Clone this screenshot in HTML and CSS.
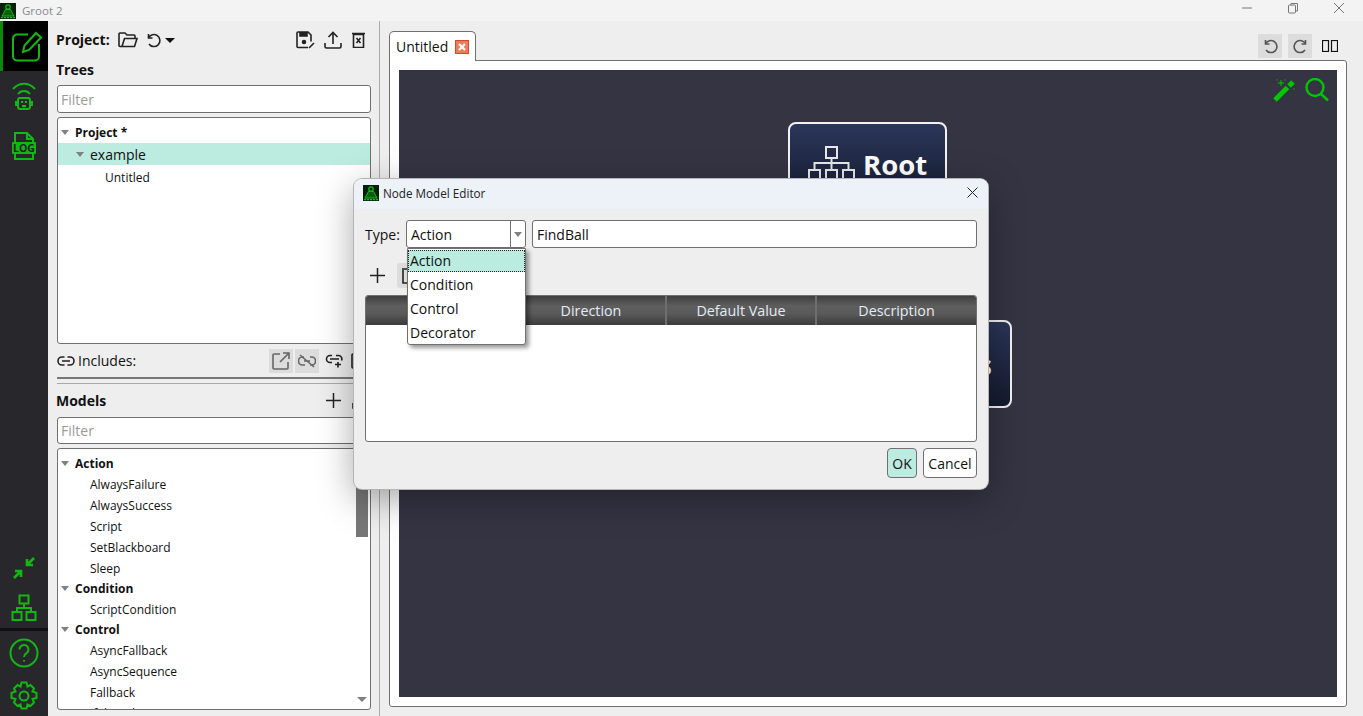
FILE: index.html

```html
<!DOCTYPE html>
<html lang="en">
<head>
  <meta charset="UTF-8" />
  <meta name="viewport" content="width=device-width, initial-scale=1.0" />
  <title>Groot 2</title>
  <link rel="stylesheet" href="styles.css">
</head>
<body>

<header class="titlebar">
  <svg class="logo" viewBox="0 0 16 16"><rect width="16" height="16" fill="#04200a"/><circle cx="8" cy="4" r="2.200" fill="none" stroke="#14b814" stroke-width="1.300"/><path d="M5.500 6.500h5L14 13H2z" fill="#0b5f0b" stroke="#14b814"/><path d="M1 14.500h14" stroke="#14b814" stroke-width="1.600" stroke-dasharray="2 1"/></svg>
  <span class="app-name">Groot 2</span>
  <div class="win-btns">
    <svg viewBox="0 0 12 12"><path d="M1 6h10"/></svg>
    <svg viewBox="0 0 12 12"><rect x="1.500" y="3" width="7" height="8" rx="1"/><path d="M4 3V1.500h6.500V9H8.500"/></svg>
    <svg viewBox="0 0 12 12"><path d="M1 1l10 10M11 1L1 11"/></svg>
  </div>
</header>

<div class="app">
  <nav class="sidebar">
    <div class="side-item active">
      <svg width="32" height="32" viewBox="0 0 32 32"><path d="M18 4.500H7a4 4 0 0 0-4 4v18a4 4 0 0 0 4 4h18a4 4 0 0 0 4-4V14"/><path d="M13 22l1.500-6.500L26 3l5 4.500L19 20z"/></svg>
    </div>
    <div class="side-item">
      <svg width="26" height="30" viewBox="0 0 26 30"><path d="M2 8C8 1 18 1 24 8M7 13c3-4 9-4 12 0"/><rect x="7" y="17" width="12" height="11" rx="2"/><path d="M5 20v5M21 20v5M11 25h4"/><path d="M10 21h2M14 21h2"/></svg>
    </div>
    <div class="side-item">
      <svg width="26" height="28" viewBox="0 0 26 28"><path d="M4 10V1h12l6 6v3M4 22v5h18v-5M16 1v6h6"/><rect x="1" y="10" width="24" height="12" rx="1" fill="#12b812" stroke="none"/><text x="13" y="20" class="log-text">LOG</text></svg>
    </div>
    <div class="side-spacer"></div>
    <div class="side-item small">
      <svg class="thick" width="24" height="24" viewBox="0 0 24 24"><path d="M22 2l-7 7M15 3v6h6M2 22l7-7M3 15h6v6"/></svg>
    </div>
    <div class="side-item small">
      <svg width="26" height="28" viewBox="0 0 26 28"><rect x="8.500" y="1.500" width="9" height="8"/><rect x="1.500" y="18" width="9" height="8"/><rect x="15.500" y="18" width="9" height="8"/><path d="M13 9.500V14M6 18v-4h14v4"/></svg>
    </div>
    <div class="side-divider"></div>
    <div class="side-item help">
      <svg width="30" height="30" viewBox="0 0 30 30"><circle cx="15" cy="15" r="13.500"/><path d="M10.500 11.500a4.500 4.500 0 1 1 7 3.700c-1.500 1-2.500 1.800-2.500 3.800"/><path d="M15 22v1.500"/></svg>
    </div>
    <div class="side-item gear">
      <svg width="30" height="30" viewBox="0 0 30 30"><circle cx="15" cy="15" r="4.500"/><path d="M12.500 1.500h5l1 4 3-1.500 3.500 3.500-1.500 3 4 1.500v5l-4 1 1.500 3.500-3.500 3.500-3-1.500-1 4h-5l-1-4-3 1.500-3.500-3.500 1.500-3.500-4-1v-5l4-1.500-1.500-3L8.500 4l3 1.500z"/></svg>
    </div>
  </nav>

  <aside class="panel">
    <div class="project-row">
      <span class="heading">Project:</span>
      <svg class="ic folder" width="20" height="16" viewBox="0 0 20 16"><path d="M4 14.500H2A1 1 0 0 1 1 13.500V2a1 1 0 0 1 1-1h5l2 2h7a1 1 0 0 1 1 1v2M4 14.500L6.500 6.500H19l-2.500 8z"/></svg>
      <svg class="ic undo" width="15" height="15" viewBox="0 0 15 15"><path d="M2.500 1v4h4"/><path d="M2.500 5A6 6 0 1 1 3 11"/></svg>
      <span class="caret black"></span>
      <div class="spacer"></div>
      <svg class="ic" width="19" height="18" viewBox="0 0 19 18"><path d="M12 16.500H2a1 1 0 0 1-1-1V2a1 1 0 0 1 1-1h10l3 3v6.500"/><path d="M4 1v4h7V1" fill="#222"/><circle cx="8" cy="11" r="1.500" fill="#222"/><path d="M13 17l5-5"/></svg>
      <svg class="ic upload" width="18" height="18" viewBox="0 0 18 18"><path d="M9 13V1.500M4.500 6L9 1.500 13.500 6M1 12v3.500a1.500 1.500 0 0 0 1.500 1.500h13a1.500 1.500 0 0 0 1.500-1.500V12"/></svg>
      <svg class="ic trashx" width="13" height="16" viewBox="0 0 13 16"><path d="M1.500 2.500h10v13h-10zM0 1.500h13"/><path d="M4.500 6l4 5M8.500 6l-4 5"/></svg>
    </div>
    <div class="section-row trees-row"><span class="heading">Trees</span></div>
    <input class="filter" type="text" placeholder="Filter" />
    <div class="tree project-tree">
      <div class="row top"><span class="caret"></span><b>Project *</b></div>
      <div class="row sub selected"><span class="caret"></span><span class="big">example</span></div>
      <div class="row leaf">Untitled</div>
    </div>
    <div class="includes-row">
      <svg class="ic" width="18" height="10" viewBox="0 0 18 10"><path d="M7.500 1H5a4 4 0 0 0 0 8h2.500M10.500 1H13a4 4 0 0 1 0 8h-2.500M5 5h8"/></svg>
      <span class="includes-label">Includes:</span>
      <div class="spacer"></div>
      <span class="tool-btn"><svg class="ic soft" width="18" height="18" viewBox="0 0 18 18"><path d="M8 2H2a1 1 0 0 0-1 1v13a1 1 0 0 0 1 1h13a1 1 0 0 0 1-1v-6M11 1h6v6M17 1L8 10"/></svg></span>
      <span class="tool-btn"><svg class="ic soft" width="18" height="14" viewBox="0 0 18 14"><path d="M6 3H4.500a4 4 0 0 0 0 8H7M12 3h1.500a4 4 0 0 1 0 8H12M6 7h6M2 1l14 12"/></svg></span>
      <svg class="ic add-link" width="18" height="14" viewBox="0 0 18 14"><path d="M7 1.500H5a3.500 3.500 0 0 0 0 7h2M11 1.500h2.500a3.500 3.500 0 0 1 3 5M5 5h9M13 8v5.500M10 10.500h6"/></svg>
      <svg class="ic tail" width="16" height="16" viewBox="0 0 16 16"><path d="M4 1H2a1 1 0 0 0-1 1v12a1 1 0 0 0 1 1h12V1z"/></svg>
    </div>
    <div class="splitter"></div>
    <div class="section-row models-row">
      <span class="heading">Models</span>
      <div class="spacer"></div>
      <svg class="ic plus" width="15" height="15" viewBox="0 0 15 15"><path d="M7.500 0v15M0 7.500h15"/></svg>
      <svg class="ic tail" width="16" height="16" viewBox="0 0 16 16"><path d="M8 1v10M4 7l4 4 4-4M2 10v5h12v-5"/></svg>
    </div>
    <input class="filter models-filter" type="text" placeholder="Filter" />
    <div class="tree model-tree">
      <div class="row top"><span class="caret"></span><b>Action</b></div>
      <div class="row leaf tall">AlwaysFailure</div>
      <div class="row leaf tall">AlwaysSuccess</div>
      <div class="row leaf tall">Script</div>
      <div class="row leaf tall">SetBlackboard</div>
      <div class="row leaf tall">Sleep</div>
      <div class="row top"><span class="caret"></span><b>Condition</b></div>
      <div class="row leaf tall">ScriptCondition</div>
      <div class="row top"><span class="caret"></span><b>Control</b></div>
      <div class="row leaf tall">AsyncFallback</div>
      <div class="row leaf tall">AsyncSequence</div>
      <div class="row leaf tall">Fallback</div>
      <div class="row leaf tall">IfThenElse</div>
      <div class="scroll-thumb"></div>
      <span class="caret scroll-down"></span>
    </div>
  </aside>

  <main class="workspace">
    <div class="tab-row">
      <div class="tab">
        <span>Untitled</span>
        <span class="tab-close"><svg width="8" height="8" viewBox="0 0 8 8"><path d="M1 1l6 6M7 1L1 7"/></svg></span>
      </div>
      <div class="spacer"></div>
      <span class="tool-btn"><svg class="ic soft2" width="15" height="15" viewBox="0 0 15 15"><path d="M2.500 1v4h4"/><path d="M2.500 5A6 6 0 1 1 3 11"/></svg></span>
      <span class="tool-btn"><svg class="ic soft2" width="15" height="15" viewBox="0 0 15 15"><path d="M12.500 1v4h-4"/><path d="M12.500 5A6 6 0 1 0 12 11"/></svg></span>
      <svg class="ic columns" width="16" height="12" viewBox="0 0 16 12"><rect x="0.500" y="0.500" width="6" height="11"/><rect x="9.500" y="0.500" width="6" height="11"/></svg>
    </div>
    <div class="tab-pane">
      <div class="canvas">
        <div class="canvas-tools">
          <svg width="24" height="24" viewBox="0 0 24 24"><path class="wand" d="M3 22L15.500 9.500M17 8l4-4"/><path class="sparks" d="M9 2v6M6 5h6M5 1.500v1M13 1.500v1M22 10.500v1"/></svg>
          <svg class="lens" width="24" height="24" viewBox="0 0 24 24"><circle cx="10" cy="9.500" r="8.500"/><path d="M16 16l7 6.500"/></svg>
        </div>
        <div class="node root-node">
          <svg width="48" height="42" viewBox="0 0 48 42"><rect x="18" y="1" width="11" height="11"/><rect x="1" y="24" width="11" height="13"/><rect x="18" y="24" width="11" height="13"/><rect x="35" y="24" width="11" height="13"/><path d="M23.500 12v12M6.500 24v-7h34v7"/></svg>
          <span>Root</span>
        </div>
        <div class="node seq-node"><span>s</span></div>
      </div>
    </div>
  </main>
</div>

<section class="dialog">
  <div class="dialog-title">
    <svg class="logo small-logo" viewBox="0 0 16 16"><rect width="16" height="16" fill="#04200a"/><circle cx="8" cy="4" r="2.200" fill="none" stroke="#14b814" stroke-width="1.300"/><path d="M5.500 6.500h5L14 13H2z" fill="#0b5f0b" stroke="#14b814"/><path d="M1 14.500h14" stroke="#14b814" stroke-width="1.600" stroke-dasharray="2 1"/></svg>
    <span>Node Model Editor</span>
    <div class="spacer"></div>
    <svg class="dialog-x" width="11" height="11" viewBox="0 0 11 11"><path d="M0.500 0.500l10 10M10.500 0.500l-10 10"/></svg>
  </div>
  <div class="dialog-body">
    <div class="type-row">
      <label class="type-label">Type:</label>
      <div class="combo"><span class="combo-text">Action</span><span class="combo-arrow"><span class="caret"></span></span></div>
      <input class="name-input" type="text" value="FindBall" />
    </div>
    <div class="port-tools">
      <svg class="ic plus" width="15" height="15" viewBox="0 0 15 15"><path d="M7.500 0v15M0 7.500h15"/></svg>
      <span class="del-btn"><svg class="ic" width="12" height="16" viewBox="0 0 12 16"><path d="M1 2v13h10V2M0 1h12"/></svg></span>
    </div>
    <div class="port-table">
      <div class="port-head">
        <span class="col-name"></span>
        <span class="col">Direction</span>
        <span class="col">Default Value</span>
        <span class="col last">Description</span>
      </div>
    </div>
    <div class="dialog-footer">
      <button class="btn ok" type="button">OK</button>
      <button class="btn cancel" type="button">Cancel</button>
    </div>
  </div>
  <ul class="dropdown">
    <li class="current">Action</li>
    <li>Condition</li>
    <li>Control</li>
    <li>Decorator</li>
  </ul>
</section>

</body>
</html>
```

FILE: styles.css

```css
* {
  box-sizing: border-box;
}
html, body {
  height: 100%;
}
body {
  margin: 0;
  display: flex;
  flex-direction: column;
  overflow: hidden;
  background: #eeeeee;
  color: #111;
  font-family: "Open Sans", "Noto Sans", sans-serif;
  font-size: 12px;
}
.spacer, .side-spacer {
  flex: 1;
}
.ic {
  fill: none;
  stroke: #222;
  stroke-width: 1.6;
  flex: none;
}
.ic.soft {
  stroke: #666;
}
.ic.soft2 {
  stroke: #555;
}

/* title bar */
.titlebar {
  height: 21px;
  flex: none;
  display: flex;
  align-items: center;
  background: #f3f3f3;
}
.logo {
  width: 16px;
  height: 16px;
  flex: none;
}
.app-name {
  margin-left: 6px;
  color: #8a8a8a;
  font-size: 11.5px;
}
.win-btns {
  margin-left: auto;
  display: flex;
  gap: 34px;
  padding-right: 18px;
  margin-top: -5px;
}
.win-btns svg {
  width: 12px;
  height: 12px;
  fill: none;
  stroke: #777;
  stroke-width: 1;
}

.app {
  flex: 1;
  display: flex;
  min-height: 0;
}

/* left icon strip */
.sidebar {
  width: 48px;
  flex: none;
  display: flex;
  flex-direction: column;
  background: #27272c;
}
.sidebar svg {
  fill: none;
  stroke: #12b812;
  stroke-width: 2;
}
.sidebar svg.thick {
  stroke-width: 2.6;
}
.side-item {
  height: 50px;
  display: flex;
  align-items: center;
  justify-content: center;
}
.side-item.active {
  background: #000;
  border-left: 3px solid #0a8a0a;
}
.side-item.small {
  height: 40px;
}
.side-item.help {
  height: 44px;
}
.side-item.gear {
  height: 41px;
}
.side-divider {
  height: 3px;
  background: #111;
}
.log-text {
  fill: #1b1b20;
  stroke: none;
  font-family: "Open Sans", sans-serif;
  font-size: 10.5px;
  font-weight: 700;
  text-anchor: middle;
}

/* project panel */
.panel {
  width: 331px;
  flex: none;
  display: flex;
  flex-direction: column;
  padding: 0 8px 6px 9px;
}
.heading {
  margin-left: -1px;
  font-size: 14px;
  font-weight: 700;
}
.project-row .heading, .trees-row .heading {
  margin-bottom: 2px;
}
.project-row {
  height: 38px;
  flex: none;
  display: flex;
  align-items: center;
}
.folder {
  margin-left: 8px;
}
.undo {
  margin-left: 8px;
}
.caret {
  display: inline-block;
  width: 0;
  height: 0;
  border: 4px solid transparent;
  border-top: 5px solid #808080;
  border-bottom: 0;
  flex: none;
}
.caret.black {
  border-width: 5px 5px 0;
  border-top-color: #111;
  margin-left: 4px;
}
.upload {
  margin-left: 9px;
}
.trashx {
  margin: 0 6px 0 10px;
}
.section-row {
  display: flex;
  align-items: center;
  flex: none;
}
.trees-row {
  height: 22px;
  margin-bottom: 4px;
}
.filter {
  height: 28px;
  flex: none;
  width: 100%;
  padding: 0 3px;
  border: 1px solid #707070;
  border-radius: 3px;
  font: inherit;
  font-size: 14px;
  background: #fff;
}
.filter::placeholder {
  color: #9a9a9a;
}
.models-filter {
  height: 27px;
}
.tree {
  position: relative;
  margin-top: 4px;
  background: #fff;
  border: 1px solid #707070;
  border-radius: 3px;
  overflow: hidden;
  flex: none;
}
.project-tree {
  height: 227px;
  padding-top: 4px;
}
.model-tree {
  height: 262px;
  padding-top: 4.5px;
}
.row {
  height: 22px;
  display: flex;
  align-items: center;
  white-space: nowrap;
}
.row.top {
  height: 20px;
  padding-left: 3px;
}
.project-tree .row.top {
  height: 21px;
}
.row.top b {
  margin-left: 6px;
  font-size: 12px;
}
.row.sub {
  padding-left: 18px;
}
.row.sub .big {
  margin-left: 6px;
  font-size: 14px;
}
.row.selected {
  background: #bcebe0;
}
.row.leaf {
  height: 24px;
  padding-left: 47px;
}
.row.tall {
  height: 21px;
  padding-left: 32px;
}
.scroll-thumb {
  position: absolute;
  right: 2px;
  top: 12px;
  width: 12px;
  height: 76px;
  background: #777;
}
.scroll-down {
  position: absolute;
  right: 3px;
  bottom: 7px;
  border-width: 5px 5px 0;
}
.includes-row {
  height: 33px;
  flex: none;
  display: flex;
  align-items: center;
}
.includes-label {
  margin-left: 3px;
  font-size: 14px;
}
.tool-btn {
  width: 24px;
  height: 24px;
  display: inline-flex;
  align-items: center;
  justify-content: center;
  background: #dcdcdc;
  margin-right: 2px;
}
.add-link {
  margin: 0 8px 0 4px;
}
.tail {
  margin-right: 4px;
}
.splitter {
  height: 7px;
  flex: none;
  border-top: 2px solid #777;
  border-bottom: 1px solid #aaa;
}
.models-row {
  height: 33px;
}
.plus {
  stroke-width: 1.5;
}
.models-row .plus {
  margin-right: 10px;
}

/* editor area */
.workspace {
  flex: 1;
  display: flex;
  flex-direction: column;
  padding: 0 16px 9px 9px;
  border-left: 1px solid #aaa;
  min-width: 0;
}
.tab-row {
  height: 39px;
  flex: none;
  display: flex;
  align-items: flex-end;
}
.tab {
  height: 30px;
  width: 87px;
  display: flex;
  align-items: center;
  gap: 7px;
  padding: 0 0 0 6px;
  margin-bottom: -1px;
  position: relative;
  z-index: 1;
  background: #fff;
  border: 1px solid #707070;
  border-bottom: 0;
  border-radius: 5px 5px 0 0;
  font-size: 14px;
}
.tab-close {
  width: 14px;
  height: 14px;
  display: flex;
  align-items: center;
  justify-content: center;
  background: #ee7a5c;
  border: 1px solid #d9472b;
}
.tab-close svg {
  fill: none;
  stroke: #fff;
  stroke-width: 2.2;
}
.tab-row .tool-btn {
  margin: 0 6px 2px 0;
}
.columns {
  stroke-width: 1.200;
  stroke: #111;
  margin: 0 9px 8px 4px;
}
.tab-pane {
  flex: 1;
  padding: 9px;
  background: #fff;
  border: 1px solid #707070;
  border-radius: 0 3px 3px 3px;
  min-height: 0;
}
.canvas {
  position: relative;
  height: 100%;
  background: #353443;
  overflow: hidden;
}
.canvas-tools {
  position: absolute;
  top: 8px;
  right: 8px;
  display: flex;
  gap: 9px;
}
.canvas-tools svg {
  fill: none;
}
.wand {
  stroke: #00c800;
  stroke-width: 5;
}
.sparks {
  stroke: #00c800;
  stroke-width: 1;
}
.lens {
  stroke: #00c800;
  stroke-width: 2.4;
}
.node {
  position: absolute;
  display: flex;
  align-items: center;
  gap: 7px;
  border: 2px solid #f2f2f2;
  border-radius: 8px;
  background: linear-gradient(#2b3659, #141a2f);
  color: #fff;
  font-size: 27.5px;
  font-weight: 700;
}
.root-node {
  left: 389px;
  top: 52px;
  width: 159px;
  height: 88px;
  padding: 22px 0 8px 18px;
  align-items: flex-start;
}
.root-node svg {
  fill: none;
  stroke: #e8e8e8;
  stroke-width: 2;
  flex: none;
}
.root-node span {
  line-height: 38px;
}
.seq-node {
  left: 541px;
  top: 250px;
  width: 72px;
  height: 88px;
  justify-content: flex-end;
  padding-right: 18px;
}

/* dialog */
.dialog {
  position: absolute;
  left: 354px;
  top: 179px;
  width: 634px;
  height: 310px;
  background: #eeeeee;
  border-radius: 8px;
  box-shadow: 0 0 0 1px #b5b5b5, 0 10px 36px rgba(0, 0, 0, 0.35);
}
.dialog-title {
  height: 30px;
  display: flex;
  align-items: center;
  padding: 0 10px 3px 9px;
  background: #edf2f8;
  border-radius: 8px 8px 0 0;
  font-size: 11.7px;
  color: #222;
}
.small-logo {
  margin-right: 4px;
}
.dialog-x {
  fill: none;
  stroke: #222;
  stroke-width: 1;
}
.dialog-body {
  padding: 11px 11px 0;
}
.type-row {
  height: 28px;
  display: flex;
  align-items: center;
  font-size: 14px;
}
.type-label {
  width: 41px;
}
.combo {
  width: 120px;
  height: 28px;
  flex: none;
  display: flex;
  align-items: center;
  background: #fff;
  border: 1px solid #707070;
  border-radius: 3px;
}
.combo-text {
  flex: 1;
  padding-left: 4px;
}
.combo-arrow {
  width: 15px;
  height: 100%;
  display: flex;
  align-items: center;
  justify-content: center;
  border-left: 1px solid #707070;
}
.name-input {
  flex: 1;
  height: 28px;
  min-width: 0;
  margin-left: 6px;
  padding: 0 4px;
  border: 1px solid #707070;
  border-radius: 3px;
  font: inherit;
  color: #111;
}
.port-tools {
  height: 25px;
  margin-top: 15px;
  display: flex;
  align-items: center;
  padding-left: 5px;
}
.del-btn {
  width: 30px;
  height: 25px;
  margin-left: 12px;
  display: flex;
  align-items: center;
  padding-left: 5px;
  background: #dcdcdc;
  border-radius: 3px;
}
.port-table {
  height: 147px;
  margin-top: 7px;
  background: #fff;
  border: 1px solid #707070;
  border-radius: 3px;
  overflow: hidden;
}
.port-head {
  height: 29px;
  display: flex;
  background: linear-gradient(#3f3f3f, #5e5e5e 35%, #5a5a5a 60%, #3c3c3c);
  color: #e4ebf2;
  font-size: 14.3px;
}
.col-name {
  width: 151px;
}
.col {
  width: 150px;
  display: flex;
  align-items: center;
  justify-content: center;
  border-right: 2px solid #6e6e6e;
}
.col.last {
  flex: 1;
  border-right: 0;
}
.dialog-footer {
  margin-top: 6px;
  display: flex;
  justify-content: flex-end;
  gap: 6px;
}
.btn {
  height: 30px;
  width: 30px;
  padding: 0;
  background: #fff;
  border: 1px solid #707070;
  border-radius: 4px;
  font: inherit;
  font-size: 14px;
  color: #111;
}
.btn.cancel {
  width: 54px;
}
.btn.ok {
  background: #bcebe0;
}
.dropdown {
  position: absolute;
  left: 53px;
  top: 69px;
  width: 119px;
  height: 97px;
  margin: 0;
  padding: 1px 0;
  list-style: none;
  background: #fff;
  border: 1px solid #707070;
  border-radius: 0 0 3px 3px;
  box-shadow: 3px 3px 4px rgba(0, 0, 0, 0.4);
  font-size: 14px;
}
.dropdown li {
  height: 24px;
  line-height: 26px;
  padding-left: 2px;
}
.dropdown li.current {
  height: 22px;
  line-height: 20px;
  background: #bcebe0;
  border: 1px dotted #222;
  padding-left: 1px;
}
```
